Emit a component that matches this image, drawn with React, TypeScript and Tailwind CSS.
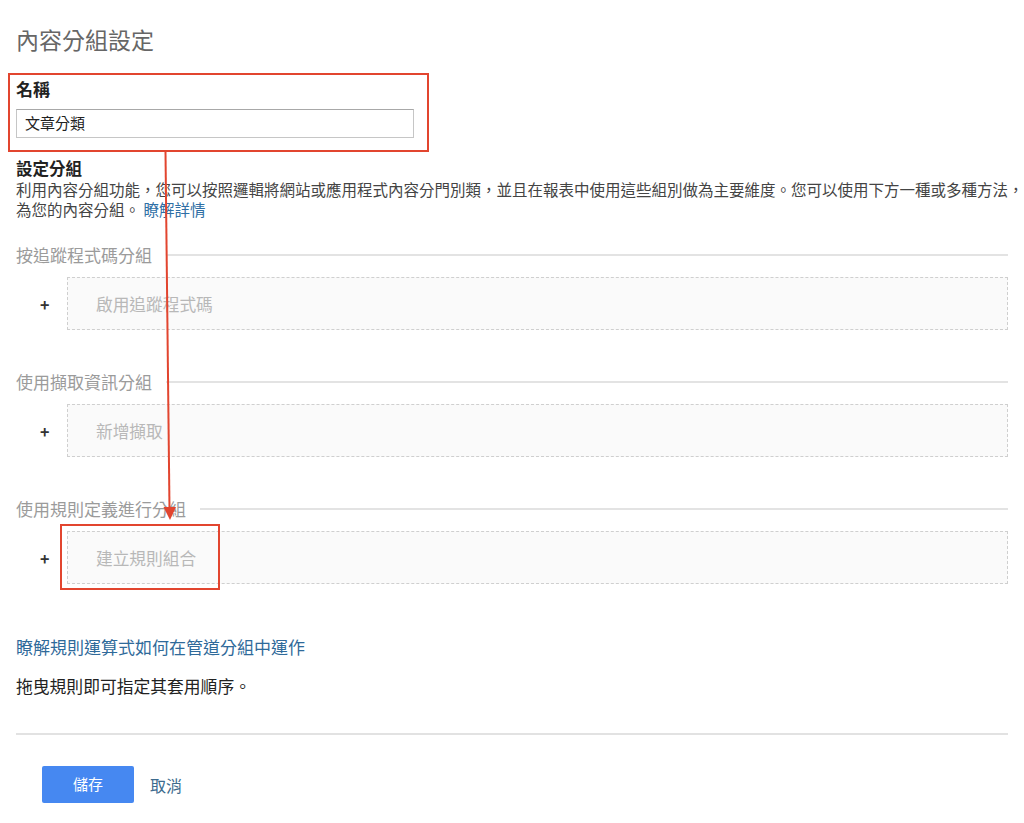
const FONT = { fontFamily: '"Noto Sans CJK TC", "Noto Sans", sans-serif' };

function GroupSection({ title, action, mt }: { title: string; action: string; mt: string }) {
  return (
    <div className={mt}>
      <div className="flex items-center">
        <span className="text-[17px] leading-[22px] text-[#9b9b9b]">{title}</span>
        <div className="ml-[14px] h-[2px] flex-1 bg-[#e3e3e3]" />
      </div>
      <div className="mt-[11px] flex items-center">
        <span className="w-[51px] pl-[24px] text-[16px] font-bold leading-none text-[#333]">+</span>
        <div className="flex h-[53px] flex-1 items-center border border-dashed border-[#cfcfcf] bg-[#fafafa] pl-[28px]">
          <span className="text-[16.7px] leading-[22px] text-[#b8b8b8]">{action}</span>
        </div>
      </div>
    </div>
  );
}

export default function App() {
  return (
    <div className="relative h-[823px] w-[1024px] overflow-hidden bg-white" style={FONT}>
      <div className="pl-[16px] pr-[16px] pt-[24px]">
        <h1 className="text-[23px] leading-[31px] text-[#666]">內容分組設定</h1>

        <div className="-ml-[8px] mt-[18px] w-[421px] border-2 border-[#e2452f] pb-[12px] pl-[6px] pt-[3px]">
          <div className="text-[17px] font-bold leading-[22px] text-[#222]">名稱</div>
          <div className="mt-[9px] flex h-[29px] w-[398px] items-center border border-[#c6c6c6] border-t-[#a8a8a8] pl-[8px] text-[15px] text-[#222]">
            文章分類
          </div>
        </div>

        <div className="mt-[5px] text-[16.5px] font-bold leading-[22px] text-[#222]">設定分組</div>
        <p className="w-[1020px] whitespace-nowrap text-[15.5px] leading-[20px] text-[#444]">
          利用內容分組功能，您可以按照邏輯將網站或應用程式內容分門別類，並且在報表中使用這些組別做為主要維度。您可以使用下方一種或多種方法，
          <br />
          為您的內容分組。 <span className="text-[#2f6fa5]">瞭解詳情</span>
        </p>

        <GroupSection title="按追蹤程式碼分組" action="啟用追蹤程式碼" mt="mt-[25px]" />
        <GroupSection title="使用擷取資訊分組" action="新增擷取" mt="mt-[41px]" />
        <GroupSection title="使用規則定義進行分組" action="建立規則組合" mt="mt-[41px]" />

        <div className="mt-[52px] text-[17px] leading-[22px] text-[#2f6a9a]">瞭解規則運算式如何在管道分組中運作</div>
        <div className="mt-[17px] text-[16.8px] leading-[22px] text-[#222]">拖曳規則即可指定其套用順序。</div>

        <div className="mt-[36px] h-[2px] bg-[#e2e2e2]" />

        <div className="ml-[26px] mt-[31px] flex items-center gap-[16px]">
          <button className="h-[37px] w-[92px] rounded-[2px] bg-[#4688f1] text-[15px] text-white">儲存</button>
          <span className="text-[16px] text-[#3d6b8e]">取消</span>
        </div>
      </div>

      {/* annotation overlay */}
      <div className="absolute left-[60px] top-[524px] h-[66px] w-[160px] border-2 border-[#e2452f]" />
      <svg className="pointer-events-none absolute left-0 top-0" width="1024" height="823">
        <line x1="165.5" y1="152" x2="169.5" y2="510" stroke="#e2452f" strokeWidth="2" />
        <polygon points="163.5,507 176,507 170,520" fill="#e2452f" />
      </svg>
    </div>
  );
}
